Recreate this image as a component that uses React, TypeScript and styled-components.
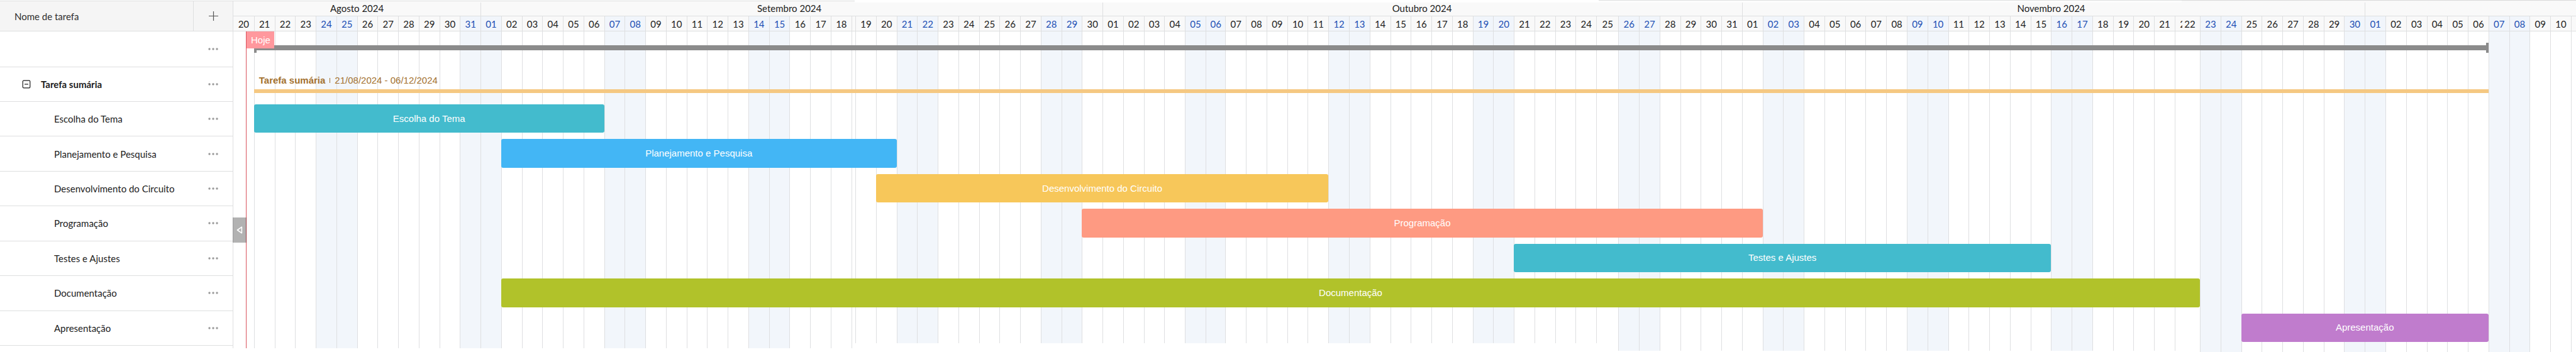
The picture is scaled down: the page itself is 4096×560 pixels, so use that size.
import React from 'react';
import styled, { createGlobalStyle } from 'styled-components';

const LINE = '#dedfe0';
const ROWS = 'minmax(0, 90fr) repeat(8, minmax(0, 88fr)) minmax(0, 16fr)';

type Column = {
  key: string;
  label: string;
  weight: number;
  weekend: boolean;
  short: number;
  ghost?: boolean;
};

const MONTHS = [
  { number: 8, name: 'Agosto 2024', first: 20, last: 31, pad: 0 },
  { number: 9, name: 'Setembro 2024', first: 1, last: 30, pad: 8 },
  { number: 10, name: 'Outubro 2024', first: 1, last: 31, pad: 2 },
  { number: 11, name: 'Novembro 2024', first: 1, last: 30, pad: 8 },
  { number: 12, name: '', first: 1, last: 11, pad: 0 },
];

const SPECIAL_WEIGHTS: Record<string, number> = {
  '10-6': 50,
  '10-25': 56,
  '11-22': 64,
  '12-11': 13,
};

// Distance between the end of a day's column and the bottom of the chart.
const bottomGap = (month: number, day: number) => {
  const order = month * 100 + day;
  if (order < 919) return 6;
  if (order < 1026) return 14;
  if (order < 1123) return 2;
  return 0;
};

const columns: Column[] = [];
for (const month of MONTHS) {
  for (let day = month.first; day <= month.last; day++) {
    const key = `${month.number}-${day}`;
    const weekday = new Date(2024, month.number - 1, day).getDay();
    columns.push({
      key,
      label: key === '12-11' ? '' : String(day).padStart(2, '0'),
      weight: SPECIAL_WEIGHTS[key] ?? 52,
      weekend: weekday === 0 || weekday === 6,
      short: bottomGap(month.number, day),
      ghost: key === '11-22',
    });
    if (key === '9-18') {
      columns.push({ key: 'gap', label: '', weight: 10, weekend: false, short: 6 });
    }
  }
}

const COLUMNS = columns.map((c) => `minmax(0, ${c.weight}fr)`).join(' ');
const lineOf = (key: string) => columns.findIndex((c) => c.key === key) + 1;

type Task = { name: string; from: string; until: string; color: string };

const TASKS: Task[] = [
  { name: 'Escolha do Tema', from: '8-21', until: '9-7', color: '#43bbcd' },
  { name: 'Planejamento e Pesquisa', from: '9-2', until: '9-21', color: '#43b6f5' },
  { name: 'Desenvolvimento do Circuito', from: '9-20', until: '10-12', color: '#f7c75a' },
  { name: 'Programação', from: '9-30', until: '11-2', color: '#fe9a82' },
  { name: 'Testes e Ajustes', from: '10-21', until: '11-16', color: '#43bbcd' },
  { name: 'Documentação', from: '9-2', until: '11-23', color: '#b1c22a' },
  { name: 'Apresentação', from: '11-25', until: '12-7', color: '#c07ccd' },
];

const GlobalStyle = createGlobalStyle`
  * { box-sizing: border-box; }
  body {
    margin: 0;
    background: #fff;
    color: #1c1c1c;
    font: 15px/18px Lato, "Liberation Sans", sans-serif;
  }
  button {
    padding: 0;
    border: 0;
    background: none;
    cursor: pointer;
  }
`;

const Page = styled.main`
  display: flex;
  min-height: 100vh;
  overflow: hidden;
`;

const Panel = styled.section`
  display: flex;
  flex-direction: column;
  flex: none;
  width: 371px;
`;

const PanelHeader = styled.header`
  display: flex;
  height: 49px;
  margin-top: 1px;
  border: 1px solid ${LINE};
  border-left: 0;
  background: #f5f5f5;
`;

const PanelTitle = styled.h1`
  display: flex;
  align-items: center;
  flex: 1;
  margin: 0;
  padding-left: 23px;
  font-size: 15px;
  font-weight: 400;
  color: #2e2e2e;
`;

const AddButton = styled.button`
  display: flex;
  align-items: center;
  justify-content: center;
  width: 63px;
  border-left: 1px solid ${LINE};
`;

const TaskList = styled.ul`
  display: grid;
  grid-template-rows: ${ROWS};
  flex: 1;
  margin: 0;
  padding: 0;
  list-style: none;
`;

const TaskItem = styled.li<{ $indent?: number; $bold?: boolean }>`
  display: flex;
  align-items: center;
  padding-left: ${(p) => p.$indent ?? 0}px;
  border-right: 1px solid ${LINE};
  border-bottom: 1px solid ${LINE};
  font-weight: ${(p) => (p.$bold ? 700 : 400)};
`;

const TaskName = styled.span`
  flex: 1;
`;

const PanelEnd = styled.li`
  margin-bottom: 6px;
  border-right: 1px solid ${LINE};
`;

const MenuButton = styled.button`
  display: flex;
  align-items: center;
  justify-content: center;
  width: 62px;
  height: 30px;
`;

const ToggleButton = styled.button`
  display: flex;
  width: 14px;
  height: 14px;
  margin-right: 16px;
`;

const Timeline = styled.section`
  position: relative;
  display: flex;
  flex-direction: column;
  flex: 1;
  min-width: 0;
`;

const TopEdge = styled.div`
  display: grid;
  grid-template-columns: 1569fr 1878fr 1471fr 995fr;
  height: 4px;
`;

const EdgePiece = styled.div<{ $top: number; $line: string; $fill: string }>`
  margin-top: ${(p) => p.$top}px;
  border-top: 1px solid ${(p) => p.$line};
  background: ${(p) => p.$fill};
`;

const MonthRow = styled.div`
  display: grid;
  grid-template-columns: ${COLUMNS};
  height: 22px;
  background: #f9f9f9;
  border-bottom: 1px solid ${LINE};
`;

const Month = styled.div<{ $pad: number; $first: boolean }>`
  display: flex;
  align-items: center;
  justify-content: center;
  padding: 0 ${(p) => p.$pad}px 3px 0;
  border-left: ${(p) => (p.$first ? 0 : 1)}px solid ${LINE};
`;

const DayRow = styled.div`
  display: grid;
  grid-template-columns: ${COLUMNS};
  height: 24px;
  border-bottom: 1px solid ${LINE};
`;

const Day = styled.div<{ $weekend: boolean; $first: boolean }>`
  display: flex;
  align-items: center;
  justify-content: center;
  border-left: ${(p) => (p.$first ? 0 : 1)}px solid ${LINE};
  background: ${(p) => (p.$weekend ? '#f1f5fb' : '#f9f9f9')};
  color: ${(p) => (p.$weekend ? '#1c4fb4' : '#1c1c1c')};
`;

const Ghost = styled.span`
  width: 4px;
  margin-right: 3px;
  overflow: hidden;
`;

const Chart = styled.div`
  display: grid;
  grid-template: minmax(0, 1fr) / minmax(0, 1fr);
  flex: 1;
`;

const DayColumns = styled.div`
  display: grid;
  grid-area: 1 / 1;
  grid-template-columns: ${COLUMNS};
`;

const DayColumn = styled.div<{ $weekend: boolean; $first: boolean; $short: number }>`
  margin-bottom: ${(p) => p.$short}px;
  border-left: ${(p) => (p.$first ? 0 : 1)}px solid #dedfe1;
  background: ${(p) => (p.$weekend ? '#f2f6fb' : '#fff')};
`;

const BarRows = styled.div`
  display: grid;
  grid-area: 1 / 1;
  grid-template-rows: ${ROWS};
`;

const BarRow = styled.div`
  display: grid;
  grid-template-columns: ${COLUMNS};
  font-family: "Liberation Sans", Arial, sans-serif;
`;

const Span = styled.div<{ $from: string; $until: string }>`
  grid-column: ${(p) => lineOf(p.$from)} / ${(p) => lineOf(p.$until)};
`;

const ProjectSpan = styled(Span)`
  display: flex;
  align-items: center;
  align-self: start;
  height: 16px;
  margin-top: 18px;
  border: solid #8b8b8b;
  border-width: 0 4px;
`;

const ProjectLine = styled.div`
  flex: 1;
  height: 8px;
  background: #8b8b8b;
`;

const SummarySpan = styled(Span)`
  display: flex;
  flex-direction: column;
  gap: 5px;
  padding-top: 12px;
`;

const SummaryLabel = styled.div`
  display: flex;
  align-items: center;
  padding-left: 8px;
  color: #a3712f;
`;

const SummaryDivider = styled.i`
  width: 1px;
  height: 8px;
  margin: 0 7px;
  background: #a3712f;
`;

const SummaryLine = styled.div`
  height: 6px;
  background: #f5c882;
`;

const TaskBar = styled(Span)<{ $color: string }>`
  display: flex;
  align-items: center;
  justify-content: center;
  margin: 4px 0 6px;
  border-radius: 3px;
  background: ${(p) => p.$color};
  color: #fff;
`;

const Today = styled.div`
  position: absolute;
  top: 50px;
  bottom: 6px;
  left: 20px;
  border-left: 1px solid #d9545e;
`;

const TodayFlag = styled.div`
  height: 27px;
  padding: 5px 6px 4px 7px;
  background: #ff989d;
  color: #fff;
  font-family: "Liberation Sans", Arial, sans-serif;
`;

const CollapseButton = styled.button`
  position: absolute;
  top: 346px;
  left: -1px;
  display: flex;
  align-items: center;
  justify-content: center;
  width: 22px;
  height: 40px;
  background: rgba(0, 0, 0, 0.3);
`;

const Menu = () => (
  <MenuButton aria-label="Mais opções">
    <svg width="18" height="4" viewBox="0 0 18 4" fill="#9a9a9a">
      <circle cx="3" cy="2" r="1.7" />
      <circle cx="9" cy="2" r="1.7" />
      <circle cx="15" cy="2" r="1.7" />
    </svg>
  </MenuButton>
);

export default function App() {
  return (
    <Page>
      <GlobalStyle />
      <Panel>
        <PanelHeader>
          <PanelTitle>Nome de tarefa</PanelTitle>
          <AddButton aria-label="Adicionar coluna">
            <svg width="15" height="15" viewBox="0 0 15 15" stroke="#555" strokeWidth="1.2">
              <path d="M7.5 0v15M0 7.5h15" />
            </svg>
          </AddButton>
        </PanelHeader>
        <TaskList>
          <TaskItem>
            <TaskName />
            <Menu />
          </TaskItem>
          <TaskItem $indent={35} $bold>
            <ToggleButton aria-label="Recolher grupo">
              <svg width="14" height="14" viewBox="0 0 14 14" fill="none" stroke="#1c1c1c" strokeWidth="1.2">
                <rect x="1.2" y="1.2" width="11.6" height="11.6" rx="1.6" />
                <path d="M4 7h6" />
              </svg>
            </ToggleButton>
            <TaskName>Tarefa sumária</TaskName>
            <Menu />
          </TaskItem>
          {TASKS.map((task) => (
            <TaskItem key={task.name} $indent={86}>
              <TaskName>{task.name}</TaskName>
              <Menu />
            </TaskItem>
          ))}
          <PanelEnd />
        </TaskList>
      </Panel>
      <Timeline>
        <TopEdge>
          <EdgePiece $top={1} $line={LINE} $fill="#f9f9f9" />
          <EdgePiece $top={1} $line="#fff" $fill="#fff" />
          <EdgePiece $top={0} $line={LINE} $fill="#fdfdfd" />
          <EdgePiece $top={0} $line="#d8d8d8" $fill="#f9f9f9" />
        </TopEdge>
        <MonthRow>
          {MONTHS.map((month, i) => (
            <Month
              key={month.number}
              $pad={month.pad}
              $first={i === 0}
              style={{
                gridColumn: `${lineOf(`${month.number}-${month.first}`)} / ${
                  lineOf(`${month.number}-${month.last}`) + 1
                }`,
              }}
            >
              {month.name}
            </Month>
          ))}
        </MonthRow>
        <DayRow>
          {columns.map((c, i) => (
            <Day key={c.key} $weekend={c.weekend} $first={i === 0}>
              {c.ghost && <Ghost aria-hidden="true">2</Ghost>}
              {c.label}
            </Day>
          ))}
        </DayRow>
        <Chart>
          <DayColumns>
            {columns.map((c, i) => (
              <DayColumn key={c.key} $weekend={c.weekend} $first={i === 0} $short={c.short} />
            ))}
          </DayColumns>
          <BarRows>
            <BarRow>
              <ProjectSpan $from="8-21" $until="12-7">
                <ProjectLine />
              </ProjectSpan>
            </BarRow>
            <BarRow>
              <SummarySpan $from="8-21" $until="12-7">
                <SummaryLabel>
                  <b>Tarefa sumária</b>
                  <SummaryDivider />
                  21/08/2024 - 06/12/2024
                </SummaryLabel>
                <SummaryLine />
              </SummarySpan>
            </BarRow>
            {TASKS.map((task) => (
              <BarRow key={task.name}>
                <TaskBar $from={task.from} $until={task.until} $color={task.color}>
                  {task.name}
                </TaskBar>
              </BarRow>
            ))}
          </BarRows>
        </Chart>
        <Today>
          <TodayFlag>Hoje</TodayFlag>
        </Today>
        <CollapseButton aria-label="Recolher painel">
          <svg width="10" height="12" viewBox="0 0 10 12" fill="none" stroke="#fff" strokeWidth="1.6" strokeLinejoin="round">
            <path d="M8.4 1.2v9.6L1.4 6z" />
          </svg>
        </CollapseButton>
      </Timeline>
    </Page>
  );
}
